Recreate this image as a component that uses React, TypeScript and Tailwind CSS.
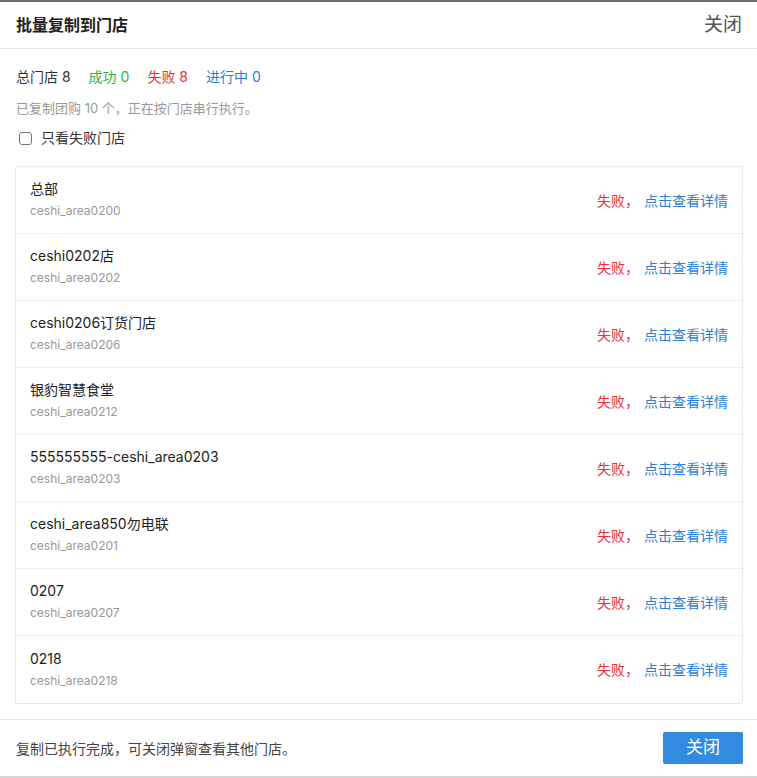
const stores = [
  { name: "总部", code: "ceshi_area0200" },
  { name: "ceshi0202店", code: "ceshi_area0202" },
  { name: "ceshi0206订货门店", code: "ceshi_area0206" },
  { name: "银豹智慧食堂", code: "ceshi_area0212" },
  { name: "555555555-ceshi_area0203", code: "ceshi_area0203" },
  { name: "ceshi_area850勿电联", code: "ceshi_area0201" },
  { name: "0207", code: "ceshi_area0207" },
  { name: "0218", code: "ceshi_area0218" },
];

export default function App() {
  return (
    <div
      className="flex h-[778px] w-[757px] flex-col border-t-2 border-b-2 border-t-[#6e6e6e] border-b-[#d4d4d4] bg-white text-[#333]"
      style={{ fontFamily: 'Inter, "Noto Sans CJK SC", sans-serif' }}
    >
      {/* header */}
      <div className="flex h-[47px] items-center justify-between border-b border-[#e8e8e8] pl-[16px] pr-[15px]">
        <h1 className="text-[16px] font-bold text-[#222]">批量复制到门店</h1>
        <button className="text-[19px] text-[#555]">关闭</button>
      </div>

      {/* body */}
      <div className="flex-1 pl-[15px] pr-[14px] pt-[17px]">
        <div className="flex gap-[18px] pl-[1px] text-[14px] leading-[22px]">
          <span className="text-[#333]">总门店 8</span>
          <span className="text-[#2db24a]">成功 0</span>
          <span className="text-[#e8303a]">失败 8</span>
          <span className="text-[#2a7fd6]">进行中 0</span>
        </div>
        <p className="mt-[11px] pl-[1px] text-[13px] leading-[18px] text-[#999]">
          已复制团购 10 个，正在按门店串行执行。
        </p>
        <label className="mt-[11px] flex items-center gap-[9px] pl-[4px] text-[14px] leading-[20px] text-[#333]">
          <span className="h-[13px] w-[13px] rounded-[3px] border border-[#767676] bg-white" />
          只看失败门店
        </label>

        <div className="mt-[18px] rounded-[2px] border border-[#e8e8e8]">
          {stores.map((s, i) => (
            <div
              key={s.code + i}
              className={`flex h-[67px] items-center justify-between px-[14px] ${
                i < stores.length - 1 ? "border-b border-[#efefef]" : ""
              }`}
            >
              <div className="flex flex-col">
                <span className="text-[14px] leading-[22px] text-[#222]">{s.name}</span>
                <span className="text-[12px] leading-[22px] text-[#999]">{s.code}</span>
              </div>
              <div className="flex items-center text-[14px]">
                <span className="w-[47px] text-[#e8303a]">失败，</span>
                <span className="text-[#2a7fd6]">点击查看详情</span>
              </div>
            </div>
          ))}
        </div>
      </div>

      {/* footer */}
      <div className="flex h-[57px] items-center justify-between border-t border-[#e8e8e8] pl-[16px] pr-[14px]">
        <span className="text-[14px] text-[#444]">复制已执行完成，可关闭弹窗查看其他门店。</span>
        <button className="h-[32px] w-[80px] rounded-[2px] bg-[#338be0] text-[17px] text-white">关闭</button>
      </div>
    </div>
  );
}
